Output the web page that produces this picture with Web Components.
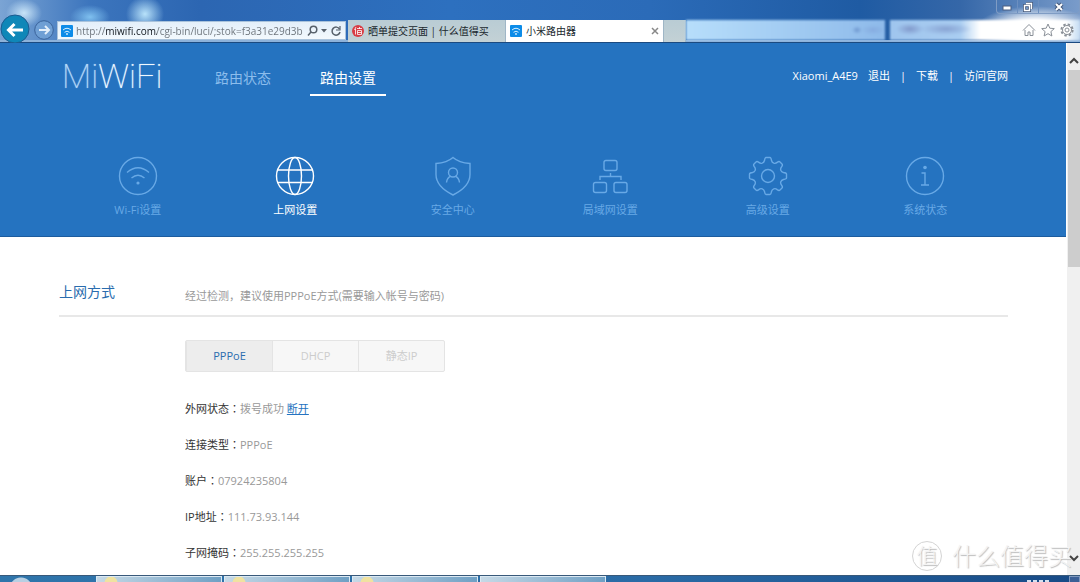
<!DOCTYPE html>
<html lang="zh-CN">
<head>
<meta charset="utf-8">
<title>小米路由器</title>
<style>
  html, body { margin: 0; height: 100%; }
  body { font-family: "Open Sans", "Noto Sans CJK SC", sans-serif; font-size: 11px; line-height: 16px; background: #fff; overflow: hidden; }
</style>
</head>
<body>
<desktop-screen></desktop-screen>
<script>
const define = (name, html) => {
  const tpl = document.createElement('template');
  tpl.innerHTML = '<style>*{box-sizing:border-box}svg{display:block}button{font:inherit;margin:0;padding:0;border:0;background:none;color:inherit}</style>' + html;
  customElements.define(name, class extends HTMLElement {
    constructor() {
      super();
      this.attachShadow({ mode: 'open' }).append(tpl.content.cloneNode(true));
    }
  });
};

define('window-controls', `
<style>
  :host { display: flex; height: 14px; width: 84px; border: 1px solid #7f9cc4; border-top: 0; border-radius: 0 0 4px 4px; }
  button { flex: 1; display: grid; place-items: center; border-right: 1px solid #6c8fc0; }
  button:last-child { flex: 2; border: 0; }
</style>
<button aria-label="最小化"><svg width="10" height="10"><rect x="1" y="4" width="8" height="4" fill="#fff" stroke="#4c5f80"/></svg></button>
<button aria-label="还原"><svg width="10" height="10" fill="none"><path d="M3 1.500h5.500v5.500M1.500 3.500h5v5h-5z" stroke="#44587a" stroke-width="3"/><path d="M3 1.500h5.500v5.500M1.500 3.500h5v5h-5z" stroke="#fff" stroke-width="1.400"/></svg></button>
<button aria-label="关闭"><svg width="10" height="10"><path d="M2 2l6 6M8 2l-6 6" stroke="#44587a" stroke-width="4"/><path d="M2 2l6 6M8 2l-6 6" stroke="#fff" stroke-width="2"/></svg></button>
`);

define('site-badge', `
<style>:host { display: block; flex: none; width: 12px; height: 12px; }</style>
<svg width="12" height="12" viewBox="0 0 12 12"><rect width="12" height="12" rx="1" fill="#0d8ce8"/><path d="M2 5q4-3.500 8 0M3.500 7.300q2.500-2.200 5 0" stroke="#d8f0ff" fill="none"/><circle cx="6" cy="9" r=".9" fill="#d8f0ff"/></svg>
`);

define('address-bar', `
<style>
  :host { display: flex; align-items: center; gap: 3px; width: 289px; height: 19px; padding: 0 3px; background: linear-gradient(#e3effa, #f3f9fd); border: 1px solid #a9c3dc; font-size: 10px; }
  input { flex: 1; min-width: 0; padding: 0; border: 0; outline: 0; height: 16px; font: inherit; color: #6a7178;
    background: linear-gradient(90deg, #6a7178 30px, #10161c 30px 81px, #6a7178 81px) text; -webkit-background-clip: text; -webkit-text-fill-color: transparent; }
  button { flex: none; }
</style>
<site-badge></site-badge>
<input aria-label="地址" value="http://miwifi.com/cgi-bin/luci/;stok=f3a31e29d3b">
<button aria-label="搜索"><svg width="11" height="12" fill="none" stroke="#57616b" stroke-width="1.500"><circle cx="6.500" cy="4.500" r="3.300"/><path d="M4 7L1 10.500"/></svg></button>
<button aria-label="历史"><svg width="6" height="4"><path d="M0 0h6L3 3.500z" fill="#57616b"/></svg></button>
<button aria-label="刷新"><svg width="12" height="12" fill="none" stroke="#57616b" stroke-width="1.500"><path d="M9.500 4A4 4 0 1 0 10 7"/><path d="M10 1v4H6" stroke-width="1.200"/></svg></button>
`);

define('browser-tab', `
<style>
  :host { display: flex; align-items: center; gap: 4px; width: 158px; height: 22px; padding: 0 4px; background: linear-gradient(#b9ccd4, #c3d1d5); color: #20282e; border-right: 1px solid #9fb6c6; font-size: 10px; }
  :host([active]) { background: #fff; }
  :host([empty]) { width: 22px; }
  .title { flex: 1; white-space: nowrap; }
</style>
<slot name="icon"></slot><span class="title"><slot></slot></span><slot name="end"></slot>
`);

define('browser-chrome', `
<style>
  :host { display: block; flex: none; position: relative; overflow: hidden; background:
    radial-gradient(ellipse 18px 14px at 24px 13px, #c8e4f8, #c8e4f800),
    radial-gradient(ellipse 20px 12px at 90px 17px, #7fc0ef, #7fc0ef00),
    radial-gradient(ellipse 19px 18px at 145px 14px, #b8e2fa, #b8e2fa00),
    radial-gradient(ellipse 60px 24px at 1035px 30px, #fff 40%, #ffffff00),
    linear-gradient(90deg, #7ba4d4 0, #3c75bd 90px, #2c66b2 200px, #2d70bf 450px, #2b6bb8 650px, #1f5ba3 860px, #3567a8 960px, #7a9cca 1080px); }
  .title { display: flex; justify-content: flex-end; height: 20px; }
  .bar { display: flex; align-items: flex-start; height: 23px; border-bottom: 1px solid #1b4a80; box-shadow: inset 0 -2px #8db2da; }
  .back { width: 29px; height: 23px; }
  .back svg { overflow: visible; }
  .fwd { width: 22px; height: 21px; margin: 0 2px 0 4px; }
  address-bar { margin: 1px 2px 0 0; }
  .glass { height: 20px; filter: blur(1px); background:
    radial-gradient(ellipse 5px 4px at calc(100% - 28px) 10px, #6f97cf, #6f97cf00),
    radial-gradient(ellipse 12px 5px at calc(100% - 12px) 10px, #86ace0, #86ace000),
    linear-gradient(90deg, #b7defb, #8ebaea); }
  .wide { flex: 1; margin-right: 5px; }
  .fav { flex: none; width: 190px; background:
    radial-gradient(ellipse 14px 6px at 20px 9px, #8199cb, #8199cb00),
    radial-gradient(ellipse 26px 6px at 56px 9px, #88a3d3, #88a3d300),
    linear-gradient(90deg, #9fc5ee, #a9cdf1 70px, #fff 90px 176px, #c4dcf3); }
  .icons { position: absolute; right: 6px; top: 23px; display: flex; gap: 5px; }
</style>
<div class="title"><window-controls></window-controls></div>
<div class="bar">
  <button class="back" aria-label="后退"><svg width="29" height="23" viewBox="0 0 29 23"><circle cx="15" cy="9" r="14" fill="#0f87b8" stroke="#1c5b90"/><path d="M23 10H9M14.500 4L8.500 10l6 6" fill="none" stroke="#fff" stroke-width="3"/></svg></button>
  <button class="fwd" aria-label="前进"><svg width="22" height="21" viewBox="0 0 22 21"><circle cx="11" cy="10" r="9.300" fill="#6f9fd4" stroke="#3a639a"/><path d="M6 10h10M12 6l4 4-4 4" fill="none" stroke="#e4effa" stroke-width="2"/></svg></button>
  <address-bar></address-bar>
  <browser-tab>
    <svg slot="icon" width="12" height="12" viewBox="0 0 12 12"><circle cx="6" cy="6" r="6" fill="#d83c44"/><path d="M4 2L2.500 5M3.500 4v5.500M5 3.500h5M7.500 2v2M5.500 5.500h4v4h-4zM5.500 7.500h4" stroke="#fff" stroke-width=".8" fill="none"/></svg>
    晒单提交页面 | 什么值得买
  </browser-tab>
  <browser-tab active><site-badge slot="icon"></site-badge>小米路由器<button slot="end" aria-label="关闭标签页"><svg width="8" height="8"><path d="M1 1l6 6M7 1L1 7" stroke="#888" stroke-width="1.500"/></svg></button></browser-tab>
  <browser-tab empty></browser-tab>
  <div class="glass wide"></div>
  <div class="glass fav"></div>
</div>
<div class="icons">
  <svg width="14" height="14" fill="#fff" stroke="#8a9098"><path d="M1 7.500L7 1.500l6 6M3 7v5.500h3V9h2v3.500h3V7"/></svg>
  <svg width="14" height="14" fill="#fff" stroke="#8a9098"><path d="M7 1l1.800 4.200 4.500.4-3.400 3 1 4.400L7 10.700 3.100 13l1-4.400-3.400-3 4.500-.4z"/></svg>
  <svg width="14" height="14" fill="none" stroke="#8a9098"><circle cx="7" cy="7" r="5.600" stroke-width="2" stroke-dasharray="2.400 2"/><circle cx="7" cy="7" r="4.500" fill="#fff"/><circle cx="7" cy="7" r="2"/></svg>
</div>
`);

define('main-tab', `
<style>
  :host { display: block; }
  a { display: block; height: 38px; padding: 10px 10px 0; font-size: 14px; line-height: 20px; color: #8cbdec; text-decoration: none; border-bottom: 2px solid transparent; }
  :host([active]) a { color: #fff; border-color: #fff; }
</style>
<a href="#"><slot></slot></a>
`);

define('user-links', `
<style>
  :host { display: flex; gap: 10px; color: #fff; }
  a { color: inherit; text-decoration: none; }
</style>
<span>Xiaomi_A4E9</span><a href="#">退出</a><span>|</span><a href="#">下载</a><span>|</span><a href="#">访问官网</a>
`);

define('section-link', `
<style>
  :host { display: block; }
  a { display: flex; flex-direction: column; align-items: center; gap: 6px; color: #68a9e6; text-decoration: none; }
  :host([active]) a { color: #fff; }
</style>
<a href="#"><slot name="icon"></slot><span><slot></slot></span></a>
`);

define('router-header', `
<style>
  :host { display: block; height: 194px; padding: 15px 58px 0 59px; background: #2573c0; border-bottom: 1px solid #1c5c9e; }
  .top { display: flex; align-items: flex-start; }
  .logo { width: 146px; padding-left: 3px; font: 100 34px/36px Roboto, sans-serif; color: #f0f9ff; text-shadow: 0 0 1px #b4d7f6; }
  .logo span { color: #b4d7f6; }
  nav.main { display: flex; gap: 29px; flex: 1; }
  user-links { padding-top: 10px; }
  nav.sections { display: grid; grid-template-columns: repeat(6, 1fr); padding: 60px 4px 0 0; }
  nav.sections svg { width: 40px; height: 40px; fill: none; stroke: currentColor; stroke-width: 1.400; }
</style>
<div class="top">
  <div class="logo"><span>Mi</span>WiFi</div>
  <nav class="main"><main-tab>路由状态</main-tab><main-tab active>路由设置</main-tab></nav>
  <user-links></user-links>
</div>
<nav class="sections">
  <section-link><svg slot="icon" viewBox="0 0 40 40"><circle cx="20" cy="20" r="18.500"/><path d="M9 16.500q11-9.500 22 0M13.500 22q6.500-5.500 13 0"/><circle cx="20" cy="27" r="1.600" fill="currentColor" stroke="none"/></svg>Wi-Fi设置</section-link>
  <section-link active><svg slot="icon" viewBox="0 0 40 40"><circle cx="20" cy="20" r="18.500"/><ellipse cx="20" cy="20" rx="6.500" ry="18.500"/><path d="M2.500 14h35M2.500 26.500h35"/></svg>上网设置</section-link>
  <section-link><svg slot="icon" viewBox="0 0 40 40"><path d="M20 1.500c4.500 4 10.500 5.500 17 6v11c0 9-7 15.500-17 20.500C10 34 3 27.500 3 18.500v-11c6.500-.5 12.500-2 17-6z"/><circle cx="20" cy="16.500" r="4.500"/><path d="M13.500 26.500c.5-4 2.500-5.500 4.300-6.300M26.500 26.500c-.5-4-2.500-5.500-4.300-6.300"/></svg>安全中心</section-link>
  <section-link><svg slot="icon" viewBox="0 0 40 40"><rect x="14" y="4.500" width="13" height="10" rx="2"/><rect x="3.500" y="26.500" width="13" height="10" rx="2"/><rect x="24" y="26.500" width="13" height="10" rx="2"/><path d="M20.500 17v3.500M10 24v-3.500h21V24"/></svg>局域网设置</section-link>
  <section-link><svg slot="icon" viewBox="0 0 40 40"><path d="M16.500 4.500Q17 1.500 18 1.500h4q1 0 1.500 3 .5 2 2.300 2.700 1.800.6 3.400-.8Q31 5 32 6l2 2q1 1-.4 2.800-1.400 1.700-.8 3.400.7 1.800 2.700 2.300 3 .5 3 1.500v4q0 1-3 1.500-2 .5-2.700 2.300-.6 1.700.8 3.400Q35 31 34 32l-2 2q-1 1-2.800-.4-1.600-1.400-3.400-.8-1.800.7-2.300 2.700-.5 3-1.500 3h-4q-1 0-1.500-3-.5-2-2.300-2.700-1.800-.6-3.400.8Q9 35 8 34l-2-2q-1-1 .4-2.800 1.400-1.700.8-3.400-.7-1.800-2.700-2.300-3-.5-3-1.500v-4q0-1 3-1.500 2-.5 2.700-2.300.6-1.700-.8-3.400Q5 9 6 8l2-2q1-1 2.800.4 1.600 1.400 3.400.8 1.800-.7 2.300-2.700z"/><circle cx="20" cy="20" r="6.500"/></svg>高级设置</section-link>
  <section-link><svg slot="icon" viewBox="0 0 40 40"><circle cx="20" cy="20" r="18.500"/><circle cx="20" cy="11.500" r="1.800" fill="currentColor" stroke="none"/><path d="M16.500 17H20v12M16 29h8"/></svg>系统状态</section-link>
</nav>
`);

define('mode-switch', `
<style>
  :host { display: flex; width: 260px; height: 32px; border: 1px solid #e4e4e4; border-radius: 2px; background: #f7f7f7; overflow: hidden; }
  button { flex: 1; color: #ccc; border-left: 1px solid #e4e4e4; }
  button:first-child { border: 0; }
  [aria-pressed=true] { color: #2a6cae; background: #ededed; }
</style>
<button aria-pressed="true">PPPoE</button><button aria-pressed="false">DHCP</button><button aria-pressed="false">静态IP</button>
`);

define('status-row', `
<style>
  :host { display: block; height: 16px; line-height: 16px; color: #999; }
  .k { color: #333; }
  .c { color: #333; font-family: "Noto Sans CJK TC", sans-serif; }
</style>
<span class="k"><slot name="label"></slot></span><span class="c" lang="zh-TW">：</span><slot></slot>
`);

define('wan-panel', `
<style>
  :host { display: block; padding: 42px 58px 0 59px; }
  header { display: flex; align-items: center; height: 38px; padding-bottom: 10px; border-bottom: 2px solid #e8e8e8; }
  h2 { margin: 0; width: 126px; font-weight: 400; font-size: 14px; line-height: 20px; color: #2a6cae; }
  p { margin: 8px 0 0; color: #999; }
  .body { padding: 23px 0 0 126px; }
  .rows { display: grid; gap: 20px; padding-top: 28px; }
  a { color: #2573c0; }
</style>
<header><h2>上网方式</h2><p>经过检测，建议使用PPPoE方式(需要输入帐号与密码)</p></header>
<div class="body">
  <mode-switch></mode-switch>
  <div class="rows">
    <status-row><span slot="label">外网状态</span>拨号成功 <a href="#">断开</a></status-row>
    <status-row><span slot="label">连接类型</span>PPPoE</status-row>
    <status-row><span slot="label">账户</span>07924235804</status-row>
    <status-row><span slot="label">IP地址</span>111.73.93.144</status-row>
    <status-row><span slot="label">子网掩码</span>255.255.255.255</status-row>
  </div>
</div>
`);

define('scroll-rail', `
<style>
  :host { display: flex; flex-direction: column; align-items: center; flex: none; width: 14px; background: #f0f0f0; border-left: 1px solid #fff; }
  .up { height: 27px; padding-top: 14px; }
  .thumb { width: 12px; flex: 0 0 37%; background: #cdcdcd; }
  .down { margin-top: auto; padding-bottom: 13px; }
  path { fill: none; stroke: #444; stroke-width: 2; }
</style>
<div class="up"><svg width="10" height="7"><path d="M1 6l4-4 4 4"/></svg></div>
<div class="thumb"></div>
<div class="down"><svg width="10" height="7"><path d="M1 1l4 4 4-4"/></svg></div>
`);

define('water-mark', `
<style>
  :host { position: absolute; right: 8px; bottom: 4px; display: flex; align-items: center; gap: 10px; font-size: 24px; font-weight: 300; line-height: 30px; color: #f4f4f4; text-shadow: 1px 1px 1px #bbb; }
  .seal { width: 30px; height: 30px; border: 1px solid #d4d4d4; border-radius: 50%; text-align: center; line-height: 27px; font-size: 21px; }
</style>
<span class="seal">值</span><span>什么值得买</span>
`);

define('task-bar', `
<style>
  :host { display: flex; gap: 2px; flex: none; height: 7px; overflow: hidden; padding-left: 96px; border-top: 1px solid #38597a; background: radial-gradient(circle at 21px 13px, #b8cfe2 11px, transparent 12px), linear-gradient(90deg, #2f75ab, #2a6ba6 60%, #174a86); }
  i { flex: none; width: 126px; height: 8px; border: 1px solid #dbe9f3; background: linear-gradient(90deg, #c6d9e6, #6fa0c4); }
  .a { background: radial-gradient(circle at 14px 6px, #f0e2a0 6px, transparent 7px), linear-gradient(90deg, #c6d9e6, #6fa0c4); }
  .tray { width: 24px; height: 2px; margin: 4px 16px 0 auto; border: 0; background: repeating-linear-gradient(90deg, #d5e0ee 0 4px, transparent 4px 6px); }
  .peek { width: 11px; border-color: #7d97bd; background: #3b5f96; }
</style>
<i class="a"></i><i class="a"></i><i class="a"></i><i></i><i class="tray"></i><i class="peek"></i>
`);

define('desktop-screen', `
<style>
  :host { display: flex; flex-direction: column; height: 100vh; }
  .view { position: relative; display: flex; flex: 1; min-height: 0; }
  main { flex: 1; min-width: 0; overflow: hidden; }
</style>
<browser-chrome></browser-chrome>
<div class="view">
  <main><router-header></router-header><wan-panel></wan-panel></main>
  <scroll-rail></scroll-rail>
  <water-mark></water-mark>
</div>
<task-bar></task-bar>
`);
</script>
</body>
</html>
